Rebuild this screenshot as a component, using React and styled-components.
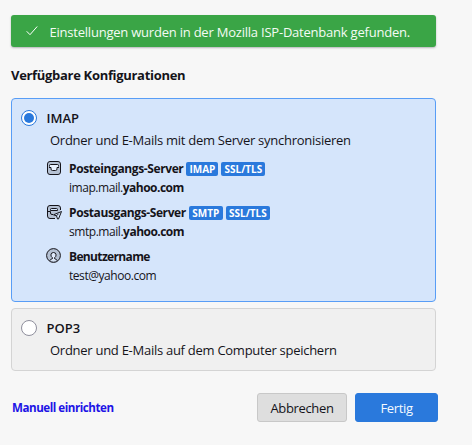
import React from 'react';
import styled, { createGlobalStyle, css } from 'styled-components';

const GlobalStyle = createGlobalStyle`
  * {
    box-sizing: border-box;
  }

  body {
    margin: 0;
    background: #f7f7f7;
    color: #15141a;
    font-family: 'Open Sans', 'Noto Sans', sans-serif;
    font-size: 13px;
    line-height: 20px;
    white-space: nowrap;
  }
`;

const Page = styled.main`
  width: 472px;
  height: 445px;
  padding: 15px 34px 0 11px;
`;

const Notification = styled.div`
  display: flex;
  align-items: center;
  width: 425px;
  height: 32px;
  padding: 2px 0 0 15px;
  border-radius: 3px;
  background: #3aa546;
  box-shadow: 0 1px 2px rgba(58, 57, 68, 0.35);
  color: #f4fbf4;
  letter-spacing: -0.22px;

  svg {
    margin: -3px 11.5px 0 0;
  }
`;

const Heading = styled.h1`
  margin: 18px 0 13px;
  font-size: 13px;
  font-weight: 700;
  line-height: 20px;
  letter-spacing: -0.31px;
`;

const Options = styled.div`
  display: flex;
  flex-direction: column;
  gap: 6px;
  width: 425px;
`;

const Option = styled.section`
  padding: 9px 9px 10px;
  border: 1px solid #d4d4d4;
  border-radius: 4px;
  background: #f0f0f0;

  ${({ $selected }) =>
    $selected &&
    css`
      padding-bottom: 16px;
      border-color: #589df6;
      background: #d5e5fb;
    `}
`;

const OptionLabel = styled.label`
  display: flex;
  align-items: center;
  gap: 9.5px;
  font-weight: 600;
`;

const Radio = styled.span`
  display: grid;
  place-items: center;
  width: 16px;
  height: 16px;
  border: 1px solid ${({ $checked }) => ($checked ? '#2a79dc' : '#8f8f9d')};
  border-radius: 50%;
  background: #fff;

  &::after {
    content: '';
    width: 10px;
    height: 10px;
    border-radius: 50%;
    background: ${({ $checked }) => ($checked ? '#2a79dc' : 'transparent')};
  }
`;

const Description = styled.p`
  margin: 2px 0 0 29px;
  letter-spacing: -0.27px;
`;

const Details = styled.div`
  display: grid;
  gap: 5px;
  margin: 8px 0 0 25px;
`;

const DetailRow = styled.div`
  display: grid;
  grid-template-columns: 16px 1fr;
  column-gap: 7px;

  svg {
    margin-top: 2px;
  }
`;

const DetailText = styled.div`
  padding-top: 1px;
`;

const DetailTitle = styled.div`
  display: flex;
  align-items: center;
  gap: 3px;
  height: 20px;
  font-size: 12px;
  font-weight: 700;
  letter-spacing: ${({ $spacing }) => $spacing};
`;

const DetailValue = styled.div`
  font-size: 12px;
  line-height: 18px;
  letter-spacing: -0.45px;

  b {
    letter-spacing: -0.52px;
  }
`;

const Protocol = styled.span`
  width: ${({ $width }) => $width}px;
  height: 14px;
  border-radius: 2px;
  background: #2a79dc;
  color: #fff;
  font-size: 10px;
  line-height: 15px;
  letter-spacing: 0;
  text-align: center;
`;

const Footer = styled.footer`
  display: flex;
  align-items: center;
  width: 427px;
  margin-top: 22px;
`;

const SetupLink = styled.a`
  margin-right: auto;
  padding: 1px 0 0 1px;
  color: #2013e6;
  font-size: 11.6px;
  font-weight: 700;
  letter-spacing: -0.47px;
`;

const Button = styled.button`
  width: ${({ $primary }) => ($primary ? 83 : 90)}px;
  height: 29px;
  margin-left: ${({ $primary }) => ($primary ? 8 : 0)}px;
  padding: 1px 0 0;
  border: 1px solid ${({ $primary }) => ($primary ? '#2a79dc' : '#c8c8c8')};
  border-radius: 3px;
  background: ${({ $primary }) => ($primary ? '#2a79dc' : '#dedede')};
  color: ${({ $primary }) => ($primary ? '#f4f9ff' : '#15141a')};
  font: 13px/20px 'Open Sans', sans-serif;
  letter-spacing: -0.35px;
`;

const CheckIcon = () => (
  <svg width='12' height='12' viewBox='0 0 12 12' fill='none'>
    <path d='M.7 6.3 4 9.7 11.2 1.5' stroke='#fff' strokeWidth='1' />
  </svg>
);

const InboxIcon = () => (
  <svg width='16' height='16' viewBox='0 0 16 16' fill='none' stroke='#15141a'>
    <rect x='1.5' y='1.5' width='13' height='13' rx='2.5' fill='#b5c1d3' />
    <path
      d='M4 7.5v-2q0-1 1-1h6q1 0 1 1v2l-1.500 3h-5z'
      fill='#e9f2ff'
      stroke='none'
    />
    <path d='M3.500 6.500v-1q0-1 1-1h7q1 0 1 1v1' />
    <path d='M3 7.500h2v1.500q0 1.500 1.500 1.500h3q1.500 0 1.500-1.500V7.500h2' />
  </svg>
);

const OutboxIcon = () => (
  <svg width='16' height='16' viewBox='0 0 16 16' fill='none' stroke='#15141a'>
    <path
      d='M14.500 6V4q0-2.500-2.500-2.500H4Q1.500 1.500 1.500 4v8q0 2.500 2.500 2.500h5'
      fill='#b5c1d3'
    />
    <path d='M4.500 6.500v-1q0-1 1-1h5q1 0 1 1v1z' fill='#d5e5fb' />
    <path d='M2 7.500h2.500v1.500q0 1.500 1.500 1.500h1' />
    <path
      d='M15.500 7.500 7.500 10.800l3 1 1 3.200h1z'
      fill='#d5e5fb'
      strokeLinejoin='round'
    />
    <path d='m10.500 11.800 2-2' />
  </svg>
);

const UserIcon = () => (
  <svg width='16' height='16' viewBox='0 0 16 16' fill='none' stroke='#15141a'>
    <circle cx='7.500' cy='7.500' r='6.900' fill='#b5c1d3' />
    <path
      d='M3.800 12.800q.4-1.700 2.700-2.200v-.8Q4.900 8.800 4.900 6.900 5 4.500 7.500 4.500t2.600 2.400q0 1.900-1.600 2.900v.8q2.300.5 2.700 2.200'
      fill='#e0ebfc'
    />
  </svg>
);

const servers = [
  {
    title: 'Posteingangs-Server',
    Icon: InboxIcon,
    host: 'imap.mail.',
    protocol: 'IMAP',
    protocolWidth: 32,
  },
  {
    title: 'Postausgangs-Server',
    Icon: OutboxIcon,
    host: 'smtp.mail.',
    protocol: 'SMTP',
    protocolWidth: 34,
  },
];

export default function App() {
  return (
    <>
      <GlobalStyle />
      <Page>
        <Notification>
          <CheckIcon />
          Einstellungen wurden in der Mozilla ISP-Datenbank gefunden.
        </Notification>

        <Heading>Verfügbare Konfigurationen</Heading>

        <Options>
          <Option $selected>
            <OptionLabel>
              <Radio $checked />
              IMAP
            </OptionLabel>
            <Description>
              Ordner und E-Mails mit dem Server synchronisieren
            </Description>
            <Details>
              {servers.map(({ title, Icon, host, protocol, protocolWidth }) => (
                <DetailRow key={protocol}>
                  <Icon />
                  <DetailText>
                    <DetailTitle $spacing='-0.39px'>
                      {title}
                      <Protocol $width={protocolWidth}>{protocol}</Protocol>
                      <Protocol $width={44}>SSL/TLS</Protocol>
                    </DetailTitle>
                    <DetailValue>
                      {host}
                      <b>yahoo.com</b>
                    </DetailValue>
                  </DetailText>
                </DetailRow>
              ))}
              <DetailRow>
                <UserIcon />
                <DetailText>
                  <DetailTitle $spacing='-0.65px'>Benutzername</DetailTitle>
                  <DetailValue>test@yahoo.com</DetailValue>
                </DetailText>
              </DetailRow>
            </Details>
          </Option>

          <Option>
            <OptionLabel>
              <Radio />
              POP3
            </OptionLabel>
            <Description>
              Ordner und E-Mails auf dem Computer speichern
            </Description>
          </Option>
        </Options>

        <Footer>
          <SetupLink>Manuell einrichten</SetupLink>
          <Button>Abbrechen</Button>
          <Button $primary>Fertig</Button>
        </Footer>
      </Page>
    </>
  );
}
